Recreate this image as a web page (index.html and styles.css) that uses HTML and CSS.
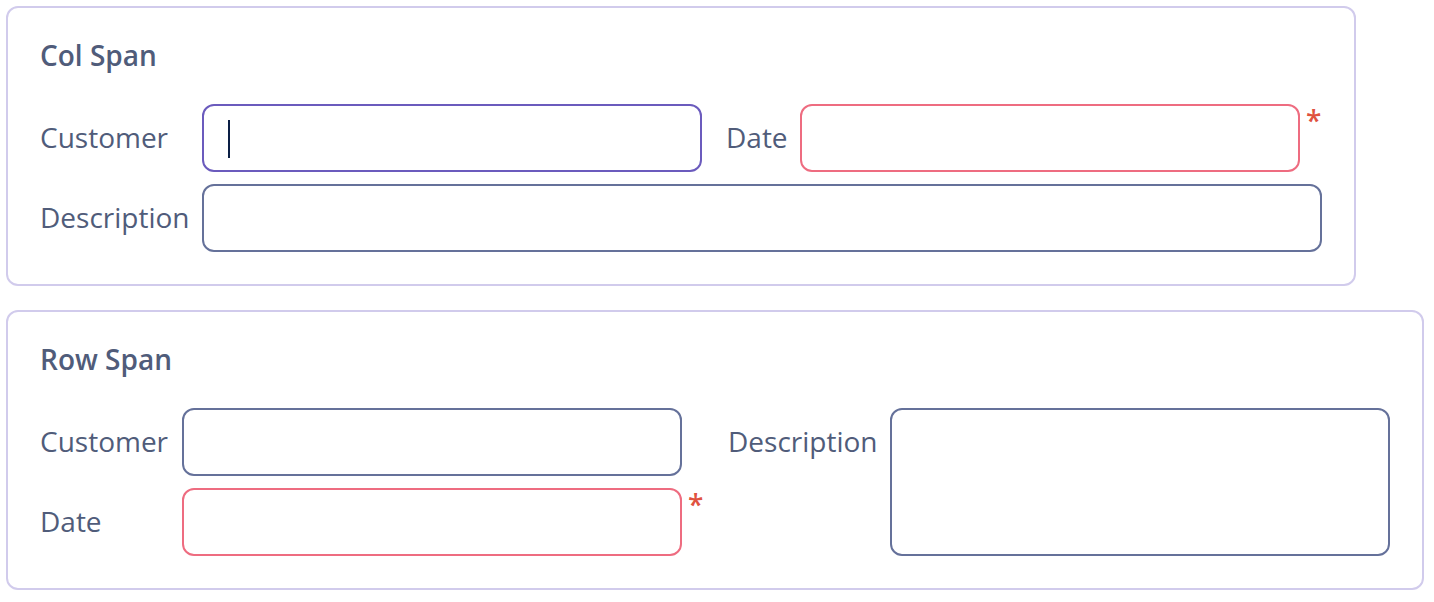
FILE: index.html
```html
<!DOCTYPE html>
<html lang="en">
<head>
<meta charset="utf-8">
<meta name="viewport" content="width=device-width, initial-scale=1">
<title>Form layout spans</title>
<link rel="stylesheet" href="styles.css">
</head>
<body>
<main class="page">
  <form class="panel panel-col">
    <h2 class="title">Col Span</h2>
    <div class="grid grid-col">
      <label class="label" for="c1">Customer</label>
      <div class="field">
        <input class="input focused" id="c1" type="text">
        <span class="caret" aria-hidden="true"></span>
      </div>
      <label class="label label-second" for="d1">Date</label>
      <input class="input invalid" id="d1" type="text" required>
      <span class="required">*</span>
      <label class="label" for="t1">Description</label>
      <input class="input span-cols" id="t1" type="text">
    </div>
  </form>
  <form class="panel">
    <h2 class="title">Row Span</h2>
    <div class="grid grid-row">
      <label class="label" for="c2">Customer</label>
      <input class="input" id="c2" type="text">
      <label class="label label-third" for="t2">Description</label>
      <textarea class="input span-rows" id="t2"></textarea>
      <label class="label" for="d2">Date</label>
      <input class="input invalid" id="d2" type="text" required>
      <span class="required">*</span>
    </div>
  </form>
</main>
</body>
</html>
```
FILE: styles.css
```css
* {
  box-sizing: border-box;
}

body {
  margin: 0;
  background: #fff;
  color: #505c7a;
  font-family: "Open Sans", "Noto Sans", sans-serif;
  font-size: 28px;
  line-height: 30px;
}

.page {
  display: flex;
  flex-direction: column;
  gap: 24px;
  padding: 6px 10px 12px 6px;
}

.panel {
  padding: 32px;
  border: 2px solid #d1cbec;
  border-radius: 12px;
}

.panel-col {
  margin-right: 68px;
}

.title {
  margin: 0 0 34px;
  font-size: 28px;
  font-weight: 600;
}

.grid {
  display: grid;
  grid-auto-rows: minmax(68px, auto);
  row-gap: 12px;
}

.grid-col {
  grid-template-columns: 162px minmax(0, 1fr) 98px minmax(0, 1fr) 22px;
}

.grid-row {
  grid-template-columns: 142px minmax(0, 1fr) 46px 162px minmax(0, 1fr);
}

.label {
  padding-top: 18px;
}

.label-second {
  padding-left: 24px;
}

.label-third {
  grid-column: 4;
}

.field {
  display: grid;
  position: relative;
}

.input {
  width: 100%;
  height: 100%;
  margin: 0;
  padding: 12px 24px;
  border: 2px solid #65719a;
  border-radius: 12px;
  outline: none;
  background: #fff;
  color: #0c1f45;
  font: inherit;
  resize: none;
}

.focused {
  border-color: #6b5bbd;
  caret-color: transparent;
}

.invalid {
  border-color: #ee6c80;
}

.caret {
  position: absolute;
  top: 16px;
  left: 26px;
  width: 2px;
  height: 38px;
  background: #0c1f45;
}

.required {
  padding-left: 6px;
  color: #e0523f;
  font-weight: 600;
  line-height: 32px;
}

.span-cols {
  grid-column: 2 / -1;
}

.span-rows {
  grid-column: 5;
  grid-row: 1 / span 2;
}
```
